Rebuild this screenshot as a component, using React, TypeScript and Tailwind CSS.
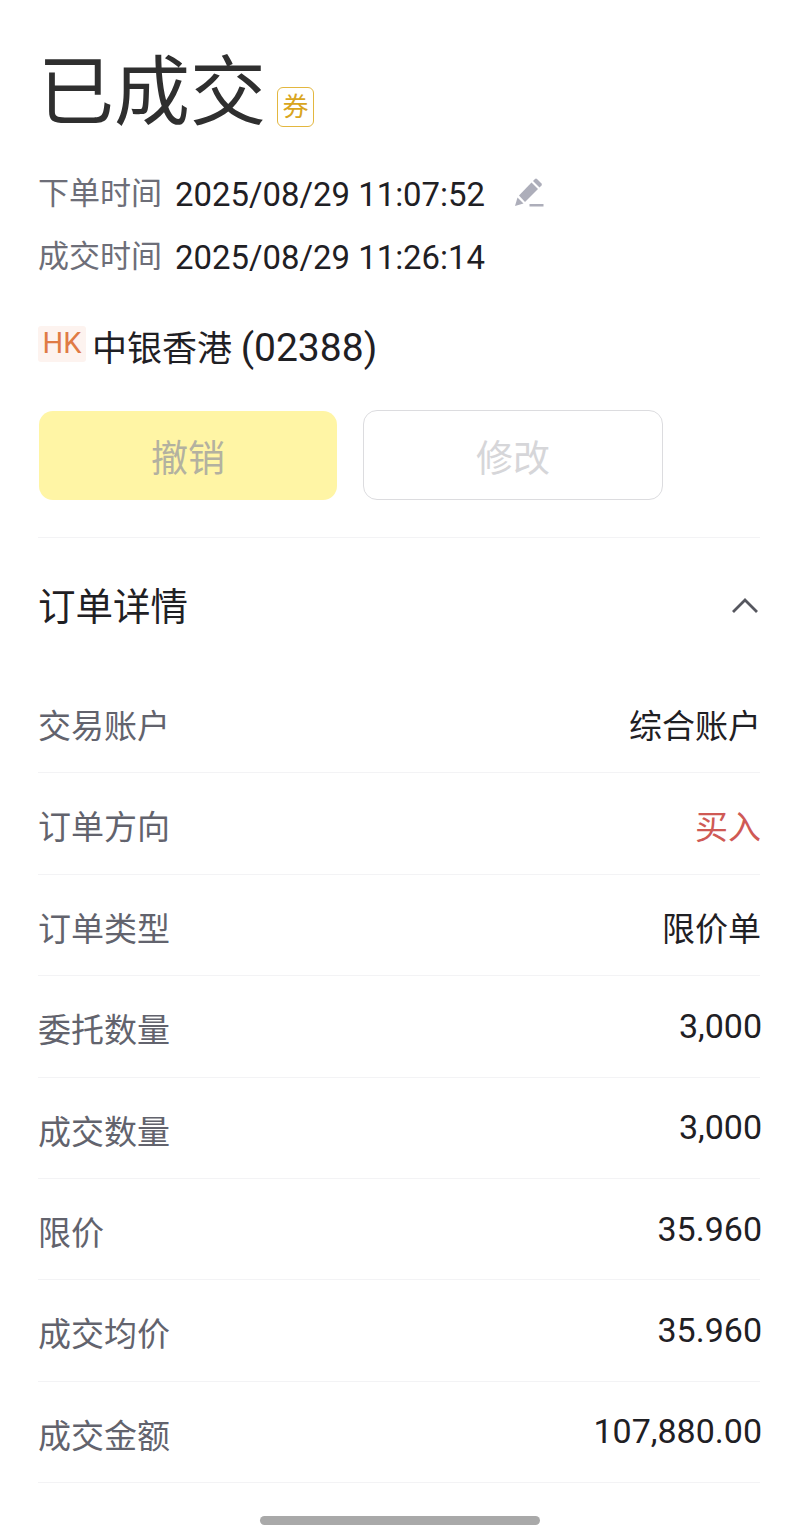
const FONT = "font-['Roboto','Noto_Sans_CJK_SC',sans-serif]";

const rows = [
  { label: "交易账户", value: "综合账户" },
  { label: "订单方向", value: "买入", accent: true },
  { label: "订单类型", value: "限价单" },
  { label: "委托数量", value: "3,000", numeric: true },
  { label: "成交数量", value: "3,000", numeric: true },
  { label: "限价", value: "35.960", numeric: true },
  { label: "成交均价", value: "35.960", numeric: true },
  { label: "成交金额", value: "107,880.00", numeric: true },
];

function PencilIcon() {
  return (
    <svg width="30" height="30" viewBox="0 0 30 30" fill="#adaeba">
      <path d="M1 28 L3.5 19.5 L9.5 25.5 Z" />
      <path d="M5 17.5 L17.5 4.5 L24 11 L11 24 Z" />
      <path d="M19 3 L21 1 Q22 0.2 23 1 L27.5 5.5 Q28.2 6.5 27.5 7.5 L25.5 9.5 Z" />
      <rect x="15.5" y="26" width="14" height="2.5" />
    </svg>
  );
}

function ChevronUp() {
  return (
    <svg width="28" height="16" viewBox="0 0 28 16" fill="none" stroke="#56575f" strokeWidth="2.8">
      <path d="M2 15 L14 3 L26 15" />
    </svg>
  );
}

export default function App() {
  return (
    <div className={`${FONT} w-[800px] h-[1536px] bg-white relative overflow-hidden`}>
      <div className="px-[38px] pt-[48px]">
        {/* Status */}
        <div className="flex items-end h-[87px]">
          <span className="text-[76px] leading-[84px] text-[#2f2f2f]">已成交</span>
          <span className="ml-[11px] mb-[8px] w-[37px] h-[40px] flex items-center justify-center rounded-[6px] border-[1.5px] border-[#e3b73f] text-[26px] text-[#d9a520]">
            券
          </span>
        </div>

        {/* Times */}
        <div className="mt-[28px] flex items-center h-[63px] text-[32.9px]">
          <span className="w-[137px] text-[31px] text-[#6d6e78]">下单时间</span>
          <span className="text-[#1f2024]">2025/08/29 11:07:52</span>
          <span className="ml-[29px] mb-[3px]"><PencilIcon /></span>
        </div>
        <div className="flex items-center h-[63px] text-[32.9px]">
          <span className="w-[137px] text-[31px] text-[#6d6e78]">成交时间</span>
          <span className="text-[#1f2024]">2025/08/29 11:26:14</span>
        </div>

        {/* Stock */}
        <div className="mt-[34px] flex items-center h-[50px]">
          <span className="w-[48px] h-[36px] mb-[8px] flex items-center justify-center bg-[#fdf3ef] rounded-[3px] text-[29px] text-[#e07b45]">
            HK
          </span>
          <span className="ml-[6px] text-[35px] text-[#1f2024]">
            中银香港 <span className="text-[39px]">(02388)</span>
          </span>
        </div>

        {/* Actions */}
        <div className="mt-[37px] flex gap-[26px] items-end">
          <div className="ml-[1px] w-[298px] h-[89px] pt-[9px] flex items-center justify-center rounded-[14px] bg-[#fff5a5] text-[37px] text-[#b3b1a0]">
            撤销
          </div>
          <div className="w-[300px] h-[90px] pt-[9px] flex items-center justify-center rounded-[14px] border-[1.5px] border-[#dcdcdf] text-[37px] text-[#d6d6d9]">
            修改
          </div>
        </div>

        <div className="mt-[37px] w-[722px] h-px bg-[#f3f3f5]" />

        {/* Order details */}
        <div className="h-[134px] flex items-center justify-between">
          <span className="pt-[5px] text-[37.5px] text-[#1f2024]">订单详情</span>
          <span className="mr-[3px] mb-[1px]"><ChevronUp /></span>
        </div>

        <div className="w-[722px]">
          {rows.map((row) => (
            <div
              key={row.label}
              className="h-[101.4px] flex items-center justify-between border-b border-[#f3f3f5]"
            >
              <span className="pt-[9px] text-[33px] text-[#62636d]">{row.label}</span>
              {row.numeric ? (
                <span className="mr-[-2px] text-[34px] text-[#1f2024]">{row.value}</span>
              ) : (
                <span className={`pt-[9px] mr-[-1px] text-[33px] ${row.accent ? "text-[#cf5a55]" : "text-[#1f2024]"}`}>
                  {row.value}
                </span>
              )}
            </div>
          ))}
        </div>
      </div>

      {/* Home indicator */}
      <div className="absolute left-[260px] top-[1516px] w-[280px] h-[9px] rounded-full bg-[#a9a9a9]" />
    </div>
  );
}
